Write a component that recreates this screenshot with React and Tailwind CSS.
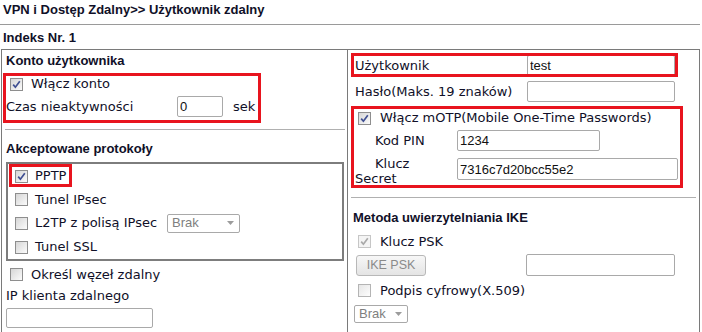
const bold = "font-bold font-['Liberation_Sans',Arial,sans-serif]";
const arial = "font-['Liberation_Sans',Arial,sans-serif]";

function Box({ checked = false, variant = "normal" }) {
  const look = {
    normal: "border-[#8e8e8e] bg-linear-to-br from-[#d6d6d6] to-[#fbfbfb]",
    disabled: "border-[#c6c6c6] bg-[#f4f4f4]",
    light: "border-[#b4b4b4] bg-linear-to-br from-[#e6e6e6] to-[#fdfdfd]",
  };
  return (
    <span className={`relative inline-block w-[13px] h-[13px] shrink-0 border ${look[variant]}`}>
      {checked && (
        <svg viewBox="0 0 11 11" className="absolute left-0 top-0 w-[11px] h-[11px]">
          <path
            d="M2.2 5.6 L4.4 8.2 L8.8 2.2"
            fill="none"
            stroke={variant === "disabled" ? "#a9a9a9" : "#3f4f92"}
            strokeWidth="1.7"
          />
        </svg>
      )}
    </span>
  );
}

function Field({ className = "", value = "" }) {
  return (
    <input
      readOnly
      defaultValue={value}
      className={`shrink-0 border border-[#a9a9a9] rounded-[2px] bg-white px-[2px] text-[13px] text-[#111] outline-none ${arial} ${className}`}
    />
  );
}

function Select({ className = "" }) {
  return (
    <div
      className={`flex items-center justify-between border border-[#a9a9a9] rounded-[2px] bg-white pl-[4px] pr-[5px] text-[13px] text-[#808080] ${arial} ${className}`}
    >
      <span>Brak</span>
      <svg viewBox="0 0 7 4" className="w-[7px] h-[4px]">
        <path d="M0 0 L7 0 L3.5 4 Z" fill="#9c9c9c" />
      </svg>
    </div>
  );
}

export default function App() {
  return (
    <div className="relative w-[702px] h-[332px] overflow-hidden bg-white text-[13px] text-[#101028] font-['DejaVu_Sans',sans-serif]">
      <div className={`h-[20px] leading-[20px] pl-[3px] ${bold}`}>
        VPN i Dostęp Zdalny&gt;&gt; Użytkownik zdalny
      </div>
      <div className="mt-[4px] mr-[2px] h-px bg-[#9a9a9a]" />
      <div className={`mt-[3px] h-[20px] leading-[20px] pl-[3px] ${bold}`}>Indeks Nr. 1</div>

      {/* tabela */}
      <div className="mt-[1px] ml-[1px] w-[699px] h-[300px] border border-[#7a7a7a] flex">
        {/* lewa kolumna */}
        <div className="w-[346px] shrink-0 border-r border-[#7a7a7a]">
          <div className={`mt-[1px] h-[20px] leading-[20px] pl-[4px] ${bold}`}>Konto użytkownika</div>
          <div className="mt-[5px] h-[16px] flex items-center pl-[8px]">
            <Box checked />
            <span className="ml-[8px]">Włącz konto</span>
          </div>
          <div className="mt-[4px] h-[21px] flex items-center pl-[4px]">
            <span className="w-[171px]">Czas nieaktywności</span>
            <Field className="w-[46px] h-[21px]" value="0" />
            <span className="ml-[10px]">sek</span>
          </div>
          <div className="mt-[12px] ml-[3px] w-[340px] h-px bg-[#b0b0b0]" />
          <div className={`mt-[9px] h-[20px] leading-[20px] pl-[4px] ${bold}`}>Akceptowane protokoły</div>
          <div className="mt-[3px] ml-[4px] w-[338px] border-2 border-[#7d7d7d]">
            <div className="h-[24px] flex items-center pl-[7px]">
              <Box checked />
              <span className="ml-[7px]">PPTP</span>
            </div>
            <div className="h-[23px] flex items-center pl-[7px]">
              <Box />
              <span className="ml-[7px]">Tunel IPsec</span>
            </div>
            <div className="h-[24px] flex items-center pl-[7px]">
              <Box />
              <span className="ml-[7px] w-[132px]">L2TP z polisą IPsec</span>
              <Select className="w-[73px] h-[19px]" />
            </div>
            <div className="h-[24px] flex items-center pl-[7px]">
              <Box />
              <span className="ml-[7px]">Tunel SSL</span>
            </div>
          </div>
          <div className="mt-[5px] h-[17px] flex items-center pl-[8px]">
            <Box />
            <span className="ml-[8px]">Określ węzeł zdalny</span>
          </div>
          <div className="mt-[3px] h-[20px] leading-[20px] pl-[4px]">IP klienta zdalnego</div>
          <Field className="mt-[2px] ml-[4px] w-[147px] h-[20px]" />
        </div>

        {/* prawa kolumna */}
        <div className="flex-1">
          <div className="mt-[5px] h-[21px] flex items-center pl-[7px]">
            <span className="w-[172px]">Użytkownik</span>
            <Field className="w-[148px] h-[21px]" value="test" />
          </div>
          <div className="mt-[5px] h-[21px] flex items-center pl-[7px]">
            <span className="w-[172px]">Hasło(Maks. 19 znaków)</span>
            <Field className="w-[148px] h-[21px]" />
          </div>
          <div className="mt-[8px] h-[16px] flex items-center pl-[10px]">
            <Box checked />
            <span className="ml-[9px]">Włącz mOTP(Mobile One-Time Passwords)</span>
          </div>
          <div className="mt-[4px] h-[21px] flex items-center pl-[27px]">
            <span className="w-[82px]">Kod PIN</span>
            <Field className="w-[143px] h-[21px]" value="1234" />
          </div>
          <div className="mt-[5px] flex pl-[7px]">
            <div className="w-[102px] leading-[15px]">
              <div className="pl-[20px]">Klucz</div>
              <div>Secret</div>
            </div>
            <Field className="mt-[2px] w-[221px] h-[22px]" value="7316c7d20bcc55e2" />
          </div>
          <div className="mt-[11px] ml-[3px] w-[345px] h-px bg-[#b0b0b0]" />
          <div className={`mt-[10px] h-[20px] leading-[20px] pl-[5px] ${bold}`}>
            Metoda uwierzytelniania IKE
          </div>
          <div className="mt-[5px] h-[17px] flex items-center pl-[10px]">
            <Box checked variant="disabled" />
            <span className="ml-[9px]">Klucz PSK</span>
          </div>
          <div className="mt-[4px] flex items-center pl-[8px]">
            <div
              className={`w-[70px] h-[21px] flex items-center justify-center rounded-[3px] border border-[#b8b8b8] bg-linear-to-b from-[#f7f7f7] to-[#e4e4e4] text-[12.5px] text-[#8a8a8a] ${arial}`}
            >
              IKE PSK
            </div>
            <Field className="ml-[100px] w-[149px] h-[22px]" />
          </div>
          <div className="mt-[6px] h-[17px] flex items-center pl-[10px]">
            <Box variant="light" />
            <span className="ml-[9px]">Podpis cyfrowy(X.509)</span>
          </div>
          <div className="mt-[6px] pl-[6px]">
            <Select className="w-[54px] h-[18px]" />
          </div>
        </div>
      </div>

      {/* czerwone ramki */}
      <div className="absolute left-[3px] top-[73px] w-[258px] h-[50px] border-[3px] border-[#e8141e]" />
      <div className="absolute left-[9px] top-[164px] w-[63px] h-[23px] border-[3px] border-[#e8141e]" />
      <div className="absolute left-[351px] top-[53px] w-[327px] h-[24px] border-[3px] border-[#e8141e]" />
      <div className="absolute left-[351px] top-[106px] w-[332px] h-[82px] border-[3px] border-[#e8141e]" />
    </div>
  );
}
